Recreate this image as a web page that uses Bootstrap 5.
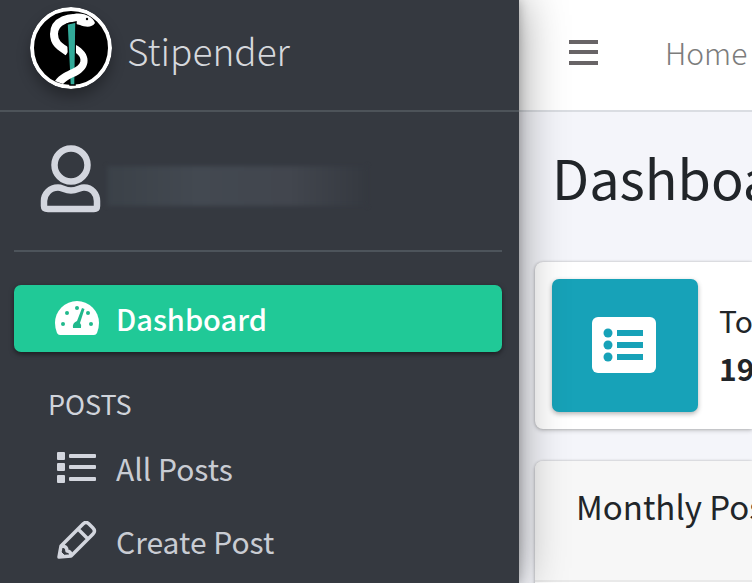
<!DOCTYPE html>
<html lang="en">
<head>
<meta charset="utf-8">
<meta name="viewport" content="width=device-width, initial-scale=1">
<title>Stipender</title>
<link rel="stylesheet" href="https://cdn.jsdelivr.net/npm/bootstrap@5.3.0/dist/css/bootstrap.min.css">
<style>
  body { font-family: "Noto Sans CJK SC", "Open Sans", sans-serif; background: #f4f5fa; color: #212529; }
  .app-shell { min-height: 100vh; }
  .sidebar { flex: 0 0 519px; background: #353940; color: #c9ccd3; z-index: 2; box-shadow: 0 0 44px rgba(0,0,0,.42), 0 0 10px rgba(0,0,0,.25); }
  .brand { height: 112px; padding: 0 0 14px 30px; gap: 15px; border-bottom: 2px solid #4d5359; color: #d6d8dc; font-size: 37px; font-weight: 300; line-height: 48px; }
  .brand:hover { color: #d6d8dc; }
  .brand span { padding-top: 4px; }
  .brand svg { border-radius: 50%; box-shadow: 0 8px 14px rgba(0,0,0,.3); }
  .side-body { padding: 0 17px 0 14px; }
  .user-panel { height: 140px; padding: 0 0 4px 26px; gap: 6px; border-bottom: 2px solid #4d545b; }
  .user-name { width: 260px; height: 40px; margin-top: 14px; background: linear-gradient(90deg, #3b4148, #434951 35%, #42464e 70%, #353940); filter: blur(2px); }
  .side-menu { margin-top: 33px; font-size: 30px; line-height: 40px; }
  .side-menu .nav-link { height: 67px; margin-bottom: 6px; padding: 0 0 4px 40px; gap: 17px; color: #c9ccd3; border-radius: 7px; }
  .side-menu .nav-link svg { width: 45px; flex: none; }
  .side-menu .nav-link.active { padding-bottom: 2px; background: #20c997; color: #fff; box-shadow: 0 2px 5px rgba(0,0,0,.5); font-size: 29px; font-weight: 500; }
  .menu-heading { height: 78px; padding: 14px 0 0 34px; margin: 0; color: #d0d4db; font-size: 27px; font-weight: 400; line-height: 36px; }
  .main-area { min-width: 0; overflow: hidden; white-space: nowrap; }
  .topbar { height: 112px; padding: 0 0 7px 49px; gap: 65px; background: #fff; border-bottom: 2px solid #dadde2; }
  .topbar a { color: #7c7c7c; font-size: 30px; font-weight: 300; line-height: 40px; }
  .page-title { margin: 0; padding: 29px 0 49px 33px; font-size: 54px; font-weight: 400; line-height: 72px; }
  .card-stack { padding-left: 16px; gap: 32px; }
  .panel { background: #fff; border-radius: 8px 0 0 8px; box-shadow: 0 0 3px rgba(0,0,0,.24), 0 2px 4px rgba(0,0,0,.16); }
  .stat { padding: 17px; gap: 21px; font-size: 30px; line-height: 48px; }
  .stat-text { padding-bottom: 4px; }
  .stat-icon { flex: 0 0 146px; height: 133px; padding: 0 2px 2px 0; border-radius: 7px; background: #17a2b8; box-shadow: 0 2px 5px rgba(0,0,0,.3); }
  .chart-panel { height: 240px; }
  .chart-head { height: 121px; padding: 23px 0 0 41px; margin: 0; background: #f7f7f7; border-radius: 8px 0 0; border-bottom: 2px solid #e9e9e9; font-size: 33px; font-weight: 400; line-height: 44px; }
</style>
<script src="https://cdn.jsdelivr.net/npm/bootstrap@5.3.0/dist/js/bootstrap.bundle.min.js"></script>
</head>
<body class="overflow-hidden">
<div class="app-shell d-flex vh-100">
  <aside class="sidebar position-relative">
    <a href="#" class="brand d-flex align-items-center text-decoration-none">
      <svg width="82" height="82" viewBox="0 0 82 82" aria-hidden="true">
        <circle cx="41" cy="41" r="39" fill="#000" stroke="#fff" stroke-width="4"/>
        <path d="M52 13C40 8 24 14 24 27C24 37 31 40 38 45" fill="none" stroke="#fff" stroke-width="8"/>
        <path d="M44 7C54 5 63 10 65 16C62 21 55 20 50 18L42 16Z" fill="#fff"/>
        <circle cx="57" cy="12" r="1.200" fill="#000"/>
        <path d="M37 17L46 15L45 78H40Z" fill="#32aa99" stroke="#000" stroke-width="1.500"/>
        <path d="M46 38C61 46 62 61 46 69C39 72 36 74 33 77L25 74C30 67 36 65 42 62C52 58 53 51 46 46Z" fill="#fff"/>
      </svg>
      <span>Stipender</span>
    </a>
    <div class="side-body">
      <div class="user-panel d-flex align-items-center">
        <svg width="61" height="70" viewBox="0 0 61 70" fill="none" stroke="#d3d6de" stroke-width="6.500" aria-hidden="true">
          <circle cx="31" cy="21" r="16.500"/>
          <path d="M18 43.500C22 43.500 25 46.500 31 46.500S40 43.500 44 43.500C52 43.500 57 50 57 57V62Q57 65 54 65H8Q4 65 4 62V57C4 50 10 43.500 18 43.500Z"/>
        </svg>
        <div class="user-name"></div>
      </div>
      <nav class="side-menu nav flex-column flex-nowrap">
        <a href="#" class="nav-link active d-flex align-items-center" aria-current="page">
          <svg height="36" viewBox="0 0 45 36" aria-hidden="true">
            <path d="M6 35Q4 35 3 33Q1 28 1 23A22 22 0 0 1 45 23Q45 28 43 33Q42 35 40 35Z" fill="#fff"/>
            <g fill="#20b98c"><circle cx="23" cy="8" r="2"/><circle cx="13" cy="13" r="2"/><circle cx="34" cy="13" r="2"/><circle cx="9" cy="24" r="2"/><circle cx="37" cy="24" r="2"/><path d="M28 8L30.500 9L26 23Q28 25 27 28H19Q18 23 23 21Z"/></g>
          </svg>
          <span>Dashboard</span>
        </a>
        <h2 class="menu-heading d-flex align-items-center">POSTS</h2>
        <a href="#" class="nav-link d-flex align-items-center">
          <svg height="36" viewBox="0 0 45 36" fill="#d3d6de" aria-hidden="true">
            <rect x="3" y="2" width="8" height="8" rx="1"/><rect x="3" y="13" width="8" height="8" rx="1"/><rect x="3" y="25" width="8" height="8" rx="1"/>
            <rect x="15" y="4" width="27" height="4" rx="1"/><rect x="15" y="15" width="27" height="4" rx="1"/><rect x="15" y="27" width="27" height="4" rx="1"/>
          </svg>
          <span>All Posts</span>
        </a>
        <a href="#" class="nav-link d-flex align-items-center">
          <svg height="40" viewBox="0 0 45 40" fill="none" stroke="#d3d6de" stroke-width="3.500" stroke-linejoin="round" aria-hidden="true">
            <path d="M5 36L7 25L29 3Q32 0 35 3L39 7Q42 10 39 13L17 35ZM24 8L34 18M8 25Q13 25 13 30Q17 30 17 35"/>
            <path d="M5 36L6 30L11 35Z" fill="#d3d6de" stroke-width="1"/>
          </svg>
          <span>Create Post</span>
        </a>
      </nav>
    </div>
  </aside>
  <div class="main-area flex-grow-1">
    <nav class="topbar d-flex align-items-center">
      <button type="button" class="btn p-0 border-0 d-flex" aria-label="Toggle sidebar">
        <svg width="32" height="28" viewBox="0 0 32 28" fill="#686466" aria-hidden="true"><path d="M1 2H30V6H1ZM1 12H30V16H1ZM1 23H30V27H1Z"/></svg>
      </button>
      <a href="#" class="text-decoration-none">Home</a>
    </nav>
    <main>
      <h1 class="page-title">Dashboard</h1>
      <div class="card-stack d-flex flex-column">
        <section class="panel stat d-flex align-items-center">
          <div class="stat-icon d-flex align-items-center justify-content-center">
            <svg width="66" height="58" viewBox="0 0 66 58" aria-hidden="true">
              <rect x="1" y="1" width="64" height="56" rx="6" fill="#fff"/>
              <g fill="#17a2b8"><circle cx="17" cy="17" r="4.500"/><circle cx="17" cy="29" r="4.500"/><circle cx="17" cy="41" r="4.500"/><path d="M26 14H52V20H26ZM26 26H52V32H26ZM26 38H52V44H26Z"/></g>
            </svg>
          </div>
          <div class="stat-text"><div>Total</div><strong class="d-block">19</strong></div>
        </section>
        <section class="panel chart-panel">
          <h2 class="chart-head">Monthly Posts</h2>
        </section>
      </div>
    </main>
  </div>
</div>
</body>
</html>
